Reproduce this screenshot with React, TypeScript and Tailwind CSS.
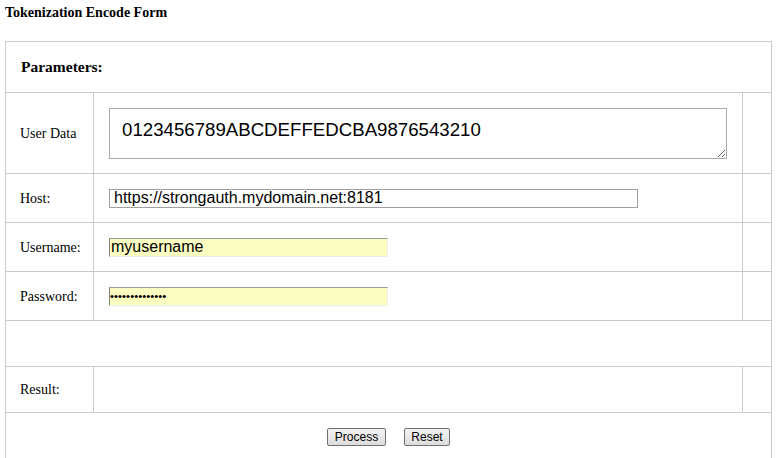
const serif = "font-['Liberation_Serif','Times_New_Roman',serif]";
const arial = "font-['Liberation_Sans',Arial,sans-serif]";

function Label({ children }: { children?: React.ReactNode }) {
  return (
    <div className={`flex w-[88px] shrink-0 items-center border-r border-[#cbcbcb] pl-[14px] text-[14px] ${serif}`}>
      {children}
    </div>
  );
}

function Row({ h, label, children }: { h: string; label: string; children?: React.ReactNode }) {
  return (
    <div className={`flex border-b border-[#cbcbcb] ${h}`}>
      <Label>{label}</Label>
      <div className="flex flex-1 items-center border-r border-[#cbcbcb] pl-[15px]">{children}</div>
      <div className="w-[28px] shrink-0" />
    </div>
  );
}

export default function App() {
  return (
    <div className="min-h-[458px] bg-white px-[5px] pt-[5px] text-black">
      <h1 className={`text-[14px] leading-[16px] font-bold ${serif}`}>Tokenization Encode Form</h1>

      <div className="mt-[20px] w-[767px] border border-[#cbcbcb]">
        {/* header */}
        <div className="flex h-[51px] items-center border-b border-[#cbcbcb] pl-[15px]">
          <span className={`text-[15.5px] font-bold ${serif}`}>Parameters:</span>
        </div>

        <Row h="h-[81px]" label="User Data">
          <textarea
            defaultValue="0123456789ABCDEFFEDCBA9876543210"
            className={`h-[51px] w-[618px] resize border border-[#a9a9a9] px-[12px] pt-[10px] text-[18.67px] leading-[21px] outline-none ${arial}`}
          />
        </Row>

        <Row h="h-[49px]" label="Host:">
          <input
            defaultValue="https://strongauth.mydomain.net:8181"
            className={`h-[19px] w-[529px] border border-[#a0a0a0] pl-[4px] text-[16px] leading-[17px] outline-none ${arial}`}
          />
        </Row>

        <Row h="h-[49px]" label="Username:">
          <input
            defaultValue="myusername"
            className={`h-[19px] w-[279px] border border-t-[#9a9a9a] border-r-[#ececec] border-b-[#ececec] border-l-[#808080] bg-[#fbfdc1] pl-[1px] text-[16px] leading-[17px] outline-none ${arial}`}
          />
        </Row>

        <Row h="h-[49px]" label="Password:">
          <input
            type="password"
            defaultValue="mypassword1234"
            className={`h-[19px] w-[279px] border border-t-[#9a9a9a] border-r-[#ececec] border-b-[#ececec] border-l-[#808080] bg-[#fbfdc1] pl-0 text-[11.5px] leading-[17px] outline-none ${arial}`}
          />
        </Row>

        <div className="h-[46px] border-b border-[#cbcbcb]" />

        <Row h="h-[46px]" label="Result:" />

        <div className="flex h-[50px] justify-center gap-[18px] pt-[15px]">
          <button className={`h-[18px] w-[59px] rounded-[2px] border border-[#707070] bg-gradient-to-b from-[#f4f4f4] to-[#dcdcdc] text-[12px] leading-[16px] ${arial}`}>
            Process
          </button>
          <button className={`h-[18px] w-[46px] rounded-[2px] border border-[#707070] bg-gradient-to-b from-[#f4f4f4] to-[#dcdcdc] text-[12px] leading-[16px] ${arial}`}>
            Reset
          </button>
        </div>
      </div>
    </div>
  );
}
